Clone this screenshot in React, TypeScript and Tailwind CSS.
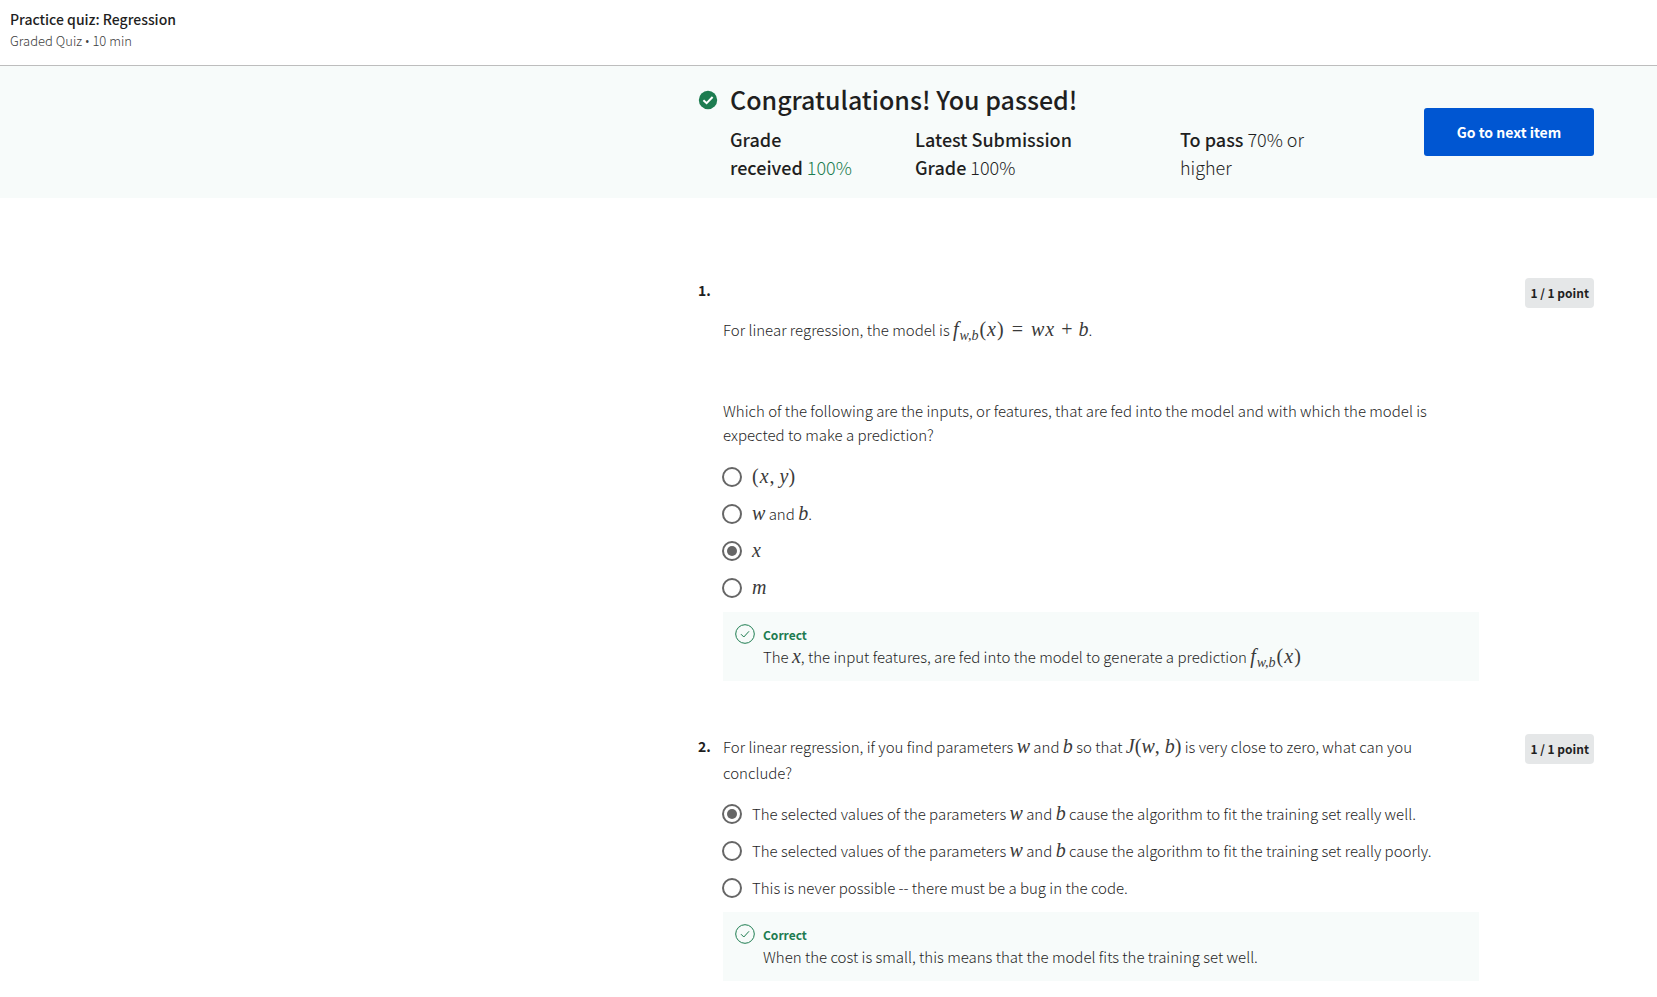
import { useState, type ReactNode } from "react";

const V = ({ children }: { children: ReactNode }) => (
  <i className="font-['Liberation_Serif',serif] text-[20px] leading-none text-[#3a3a3a]">{children}</i>
);

const X = () => (
  <span className="px-px">
    <V>x</V>
  </span>
);

const R = ({ children }: { children: ReactNode }) => (
  <span className="font-['Liberation_Serif',serif] text-[20px] leading-none text-[#3a3a3a]">{children}</span>
);

const Fwb = () => (
  <span className="whitespace-nowrap">
    <V>f</V>
    <sub className="relative top-1 px-px align-baseline font-['Liberation_Serif',serif] text-[14px] leading-none text-[#3a3a3a] italic">
      w,b
    </sub>
    <R>(</R>
    <X />
    <R>)</R>
  </span>
);

const WandB = () => (
  <>
    <V>w</V> and <V>b</V>
  </>
);

function Points() {
  return (
    <span className="shrink-0 rounded bg-[#e5e7e8] px-[5px] text-[12px] leading-[30px] font-bold text-[#1f1f1f]">
      1 / 1 point
    </span>
  );
}

function Options({ name, initial, items }: { name: string; initial: number; items: ReactNode[] }) {
  const [selected, setSelected] = useState(initial);
  return (
    <div role="radiogroup" aria-label={name} className="-ml-px flex flex-col pb-1.5">
      {items.map((item, i) => (
        <label key={i} className="flex min-h-[37px] cursor-pointer items-center gap-2.5">
          <input
            type="radio"
            name={name}
            checked={selected === i}
            onChange={() => setSelected(i)}
            className="grid size-5 shrink-0 appearance-none place-content-center rounded-full border-2 border-[#666] bg-white before:size-2.5 before:rounded-full checked:before:bg-[#666]"
          />
          <span>{item}</span>
        </label>
      ))}
    </div>
  );
}

function Feedback({ children }: { children: ReactNode }) {
  return (
    <div className="flex gap-2 bg-[#f7fbfa] p-3 pb-[13px]">
      <svg viewBox="0 0 20 20" className="size-5 shrink-0" fill="none" stroke="#1d7c50" aria-hidden="true">
        <circle cx="10" cy="10" r="9.3" />
        <path d="M6 10.2 L8.8 13 L14 7.3" />
      </svg>
      <div>
        <p className="text-[12px] leading-[21px] font-bold text-[#1d7c50]">Correct</p>
        <p className="leading-[23px]">{children}</p>
      </div>
    </div>
  );
}

function Question({ number, children }: { number: number; children: ReactNode }) {
  return (
    <li className="flex items-start">
      <span className="w-[26px] shrink-0 pl-px text-[14px] leading-6 font-bold text-[#1f1f1f]">{number}.</span>
      <div className="max-w-[756px] min-w-0 flex-1">{children}</div>
      <div className="ml-auto flex pl-4">
        <Points />
      </div>
    </li>
  );
}

export default function App() {
  return (
    <div className="min-h-screen bg-white font-['Noto_Sans_CJK_SC',sans-serif] text-[15px] leading-6 font-light text-[#1f1f1f]">
      <header className="border-b border-[#bdbdbd] px-2.5 pt-[7px] pb-3.5">
        <h1 className="text-[14px] leading-6 font-medium text-[#1f1f1f]">Practice quiz: Regression</h1>
        <p className="text-[13px] leading-5 text-[#404040]">
          Graded Quiz <span className="font-['Open_Sans',sans-serif] text-[12px] leading-none font-normal">•</span> 10 min
        </p>
      </header>

      <section className="flex justify-end bg-[#f7fbfa] px-[63px] pt-[15px] pb-[17px]">
        <div className="flex w-full max-w-[897px] items-start">
          <svg viewBox="0 0 20 20" className="mt-[9px] ml-px size-5 shrink-0" aria-hidden="true">
            <circle cx="10" cy="10" r="9.2" fill="#1d7c50" />
            <path d="M5.4 10.2 L8.6 13.2 L14.6 7" fill="none" stroke="#fff" strokeWidth="2" />
          </svg>
          <div className="ml-3">
            <h2 className="text-[25px] leading-9 font-medium text-[#1f1f1f]">Congratulations! You passed!</h2>
            <div className="mt-2 flex text-[18px] leading-7">
              <p className="w-[185px] pr-14">
                <b className="font-medium text-[#1f1f1f]">Grade received</b>
                {"\u00a0"}
                <span className="text-[#1d7c50]">100%</span>
              </p>
              <p className="w-[265px] pr-20">
                <b className="font-medium text-[#1f1f1f]">Latest Submission Grade</b> 100%
              </p>
              <p className="w-[140px]">
                <b className="font-medium text-[#1f1f1f]">To pass</b> 70% or higher
              </p>
            </div>
          </div>
          <button
            type="button"
            className="mt-[27px] ml-auto h-12 w-[170px] shrink-0 rounded-[3px] bg-[#0056d2] text-[14px] font-bold text-white"
          >
            Go to next item
          </button>
        </div>
      </section>

      <main className="flex justify-end px-[63px] pt-20">
        <ol className="flex w-full max-w-[897px] flex-col gap-[53px]">
          <Question number={1}>
            <p className="pt-10">
              For linear regression, the model is <Fwb />
              <span className="px-2">
                <R>=</R>
              </span>
              <V>w</V>
              <X />
              <span className="px-1.5">
                <R>+</R>
              </span>
              <V>b</V>.
            </p>
            <p className="pt-[57px] pb-[11px]">
              Which of the following are the inputs, or features, that are fed into the model and with which the model is
              expected to make a prediction?
            </p>
            <Options
              name="Question 1"
              initial={2}
              items={[
                <>
                  <R>(</R>
                  <X />
                  <R>, </R>
                  <V>y</V>
                  <R>)</R>
                </>,
                <>
                  <WandB />.
                </>,
                <V>x</V>,
                <V>m</V>,
              ]}
            />
            <Feedback>
              The <V>x</V>, the input features, are fed into the model to generate a prediction <Fwb />
            </Feedback>
          </Question>
          <Question number={2}>
            <p className="pb-[9px] leading-[26px]">
              For linear regression, if you find parameters <WandB /> so that <V>J</V>
              <R>(</R>
              <V>w</V>
              <R>, </R>
              <V>b</V>
              <R>)</R> is very close to zero, what can you conclude?
            </p>
            <Options
              name="Question 2"
              initial={0}
              items={[
                <>
                  The selected values of the parameters <WandB /> cause the algorithm to fit the training set really well.
                </>,
                <>
                  The selected values of the parameters <WandB /> cause the algorithm to fit the training set really
                  poorly.
                </>,
                <>This is never possible -- there must be a bug in the code.</>,
              ]}
            />
            <Feedback>When the cost is small, this means that the model fits the training set well.</Feedback>
          </Question>
        </ol>
      </main>
    </div>
  );
}
